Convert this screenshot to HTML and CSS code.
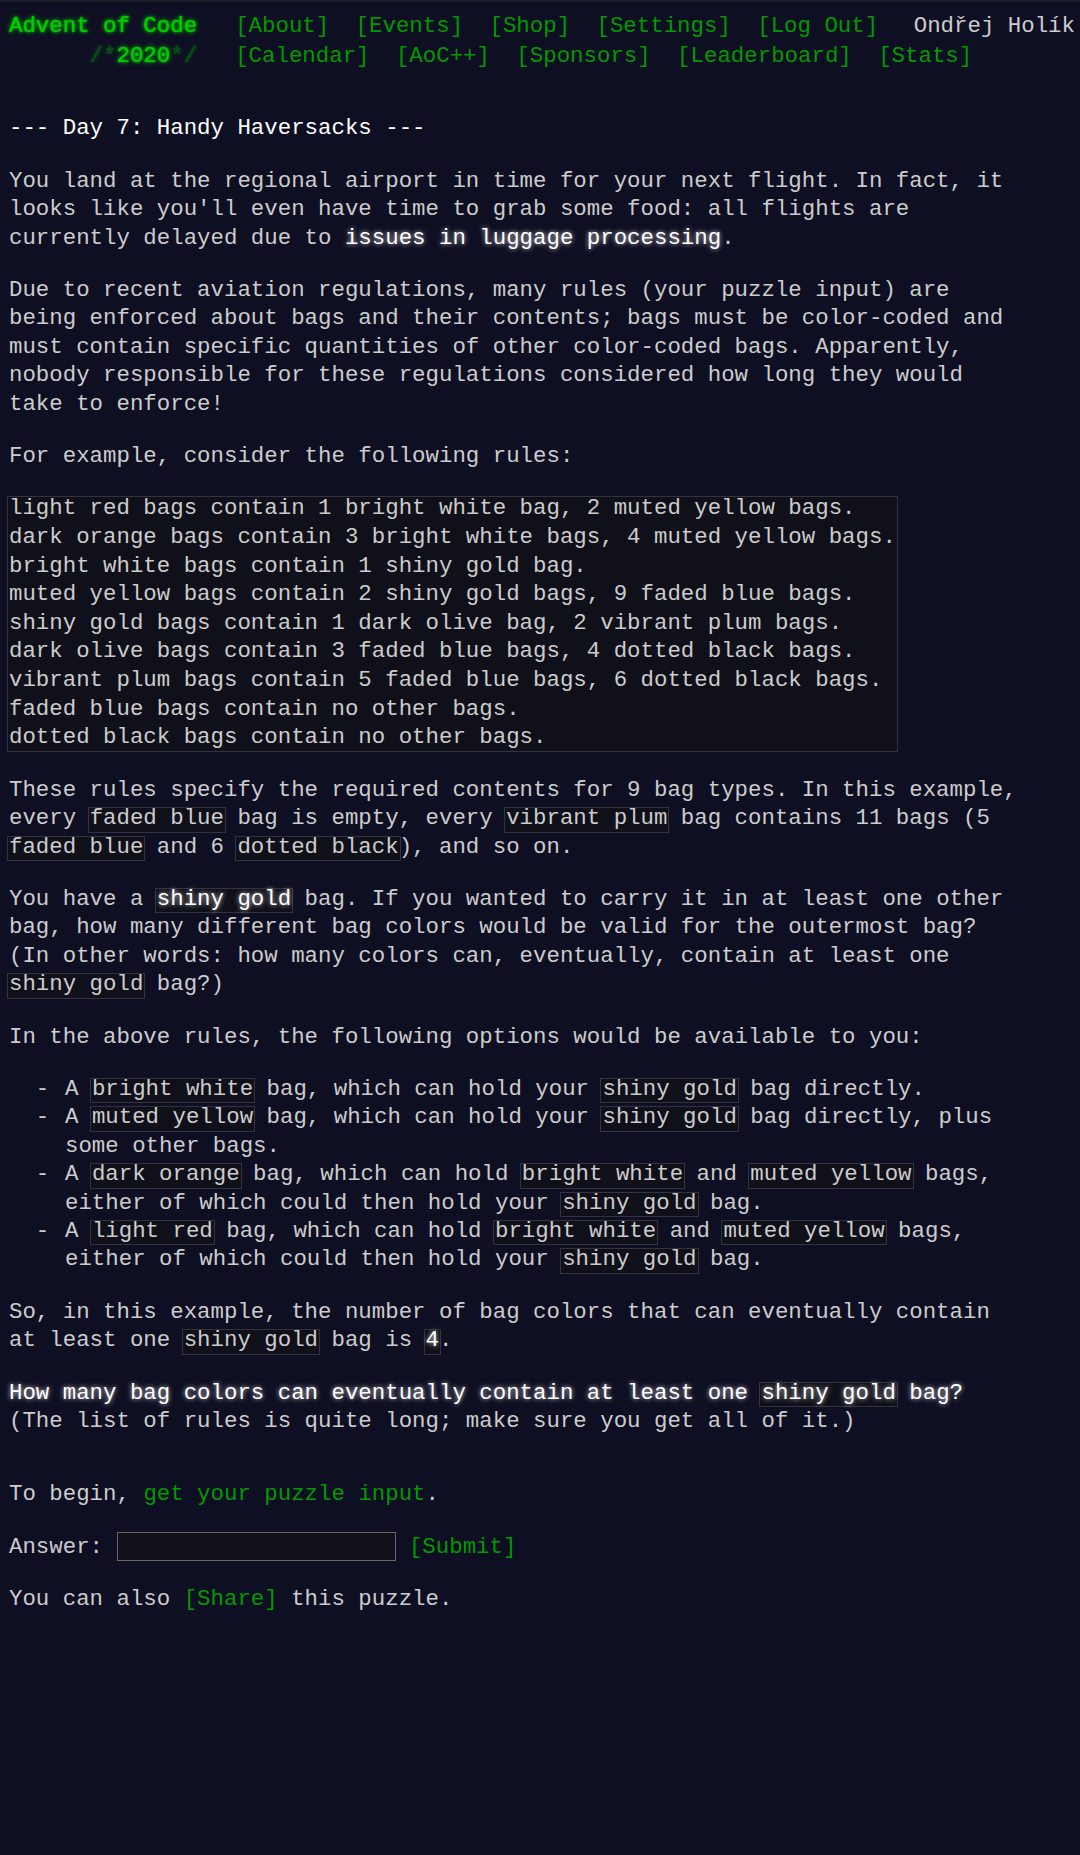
FILE: index.html
```html
<!DOCTYPE html>
<html lang="en">
<head>
<meta charset="utf-8">
<title>Day 7 - Advent of Code 2020</title>
<link rel="stylesheet" href="styles.css">
</head>
<body>
<header class="site-header">
  <div class="hrow">
    <h1 class="title"><a href="#" class="glow">Advent of Code</a></h1>
    <nav class="nav">
      <ul class="nav-list">
        <li><a href="#">[About]</a></li>
        <li><a href="#">[Events]</a></li>
        <li><a href="#">[Shop]</a></li>
        <li><a href="#">[Settings]</a></li>
        <li><a href="#">[Log Out]</a></li>
      </ul>
    </nav>
    <div class="user">Ondřej Holík</div>
  </div>
  <div class="hrow">
    <h1 class="title"><span class="glow dim">&nbsp;&nbsp;&nbsp;&nbsp;&nbsp;&nbsp;/*</span><a href="#" class="glow">2020</a><span class="glow dim">*/</span></h1>
    <nav class="nav">
      <ul class="nav-list">
        <li><a href="#">[Calendar]</a></li>
        <li><a href="#">[AoC++]</a></li>
        <li><a href="#">[Sponsors]</a></li>
        <li><a href="#">[Leaderboard]</a></li>
        <li><a href="#">[Stats]</a></li>
      </ul>
    </nav>
  </div>
</header>
<main class="main">
<article class="day-desc">
<h2 class="day-title">--- Day 7: Handy Haversacks ---</h2>
<p>You land at the regional airport in time for your next flight. In fact, it looks like you'll even have time to grab some food: all flights are currently delayed due to <em>issues in luggage processing</em>.</p>
<p>Due to recent aviation regulations, many rules (your puzzle input) are being enforced about bags and their contents; bags must be color-coded and must contain specific quantities of other color-coded bags. Apparently, nobody responsible for these regulations considered how long they would take to enforce!</p>
<p>For example, consider the following rules:</p>
<pre class="rules"><code>light red bags contain 1 bright white bag, 2 muted yellow bags.
dark orange bags contain 3 bright white bags, 4 muted yellow bags.
bright white bags contain 1 shiny gold bag.
muted yellow bags contain 2 shiny gold bags, 9 faded blue bags.
shiny gold bags contain 1 dark olive bag, 2 vibrant plum bags.
dark olive bags contain 3 faded blue bags, 4 dotted black bags.
vibrant plum bags contain 5 faded blue bags, 6 dotted black bags.
faded blue bags contain no other bags.
dotted black bags contain no other bags.
</code></pre>
<p>These rules specify the required contents for 9 bag types. In this example, every <code>faded blue</code> bag is empty, every <code>vibrant plum</code> bag contains 11 bags (5 <code>faded blue</code> and 6 <code>dotted black</code>), and so on.</p>
<p>You have a <code><em>shiny gold</em></code> bag. If you wanted to carry it in at least one other bag, how many different bag colors would be valid for the outermost bag? (In other words: how many colors can, eventually, contain at least one <code>shiny gold</code> bag?)</p>
<p>In the above rules, the following options would be available to you:</p>
<ul class="options">
<li><span class="opt">A <code>bright white</code> bag, which can hold your <code>shiny gold</code> bag directly.</span></li>
<li><span class="opt">A <code>muted yellow</code> bag, which can hold your <code>shiny gold</code> bag directly, plus some other bags.</span></li>
<li><span class="opt">A <code>dark orange</code> bag, which can hold <code>bright white</code> and <code>muted yellow</code> bags, either of which could then hold your <code>shiny gold</code> bag.</span></li>
<li><span class="opt">A <code>light red</code> bag, which can hold <code>bright white</code> and <code>muted yellow</code> bags, either of which could then hold your <code>shiny gold</code> bag.</span></li>
</ul>
<p>So, in this example, the number of bag colors that can eventually contain at least one <code>shiny gold</code> bag is <code><em>4</em></code>.</p>
<p><em>How many bag colors can eventually contain at least one <code>shiny gold</code> bag?</em> (The list of rules is quite long; make sure you get all of it.)</p>
</article>
<p>To begin, <a href="#">get your puzzle input</a>.</p>
<form class="answer-form"><p>Answer: <input type="text" class="answer-input" autocomplete="off"> <input type="submit" class="submit" value="[Submit]"></p></form>
<p>You can also <a href="#">[Share]</a> this puzzle.</p>
</main>
</body>
</html>
```
FILE: styles.css
```css
html {
  background: #0f0f23;
  border-top: 2px solid #1d1d2b;
}

body {
  margin: 0;
  padding: 8px 8px 8px 9px;
  color: #cccccc;
  font-family: "Liberation Mono", "DejaVu Sans Mono", monospace;
  font-size: 22.4px;
  line-height: 28.4px;
}

a {
  color: #009900;
  text-decoration: none;
}

.site-header {
  white-space: nowrap;
  padding-top: 0.5px;
  margin-bottom: 43.5px;
}

.hrow {
  display: flex;
  align-items: baseline;
  line-height: 30px;
}

.title {
  font-size: 1em;
  font-weight: normal;
  margin: 0;
  width: 188.2px;
  padding-right: 24.8px;
  flex: none;
}

.glow {
  color: #00cc00;
  text-shadow: 0 0 2px #00cc00, 0 0 5px #00cc00;
}

.dim {
  opacity: 0.33;
  white-space: pre;
}

.nav-list {
  list-style: none;
  margin: 0;
  padding: 0;
  display: flex;
}

.nav-list li {
  padding: 0 13.2px;
}

.user {
  margin-left: 22.4px;
  color: #cccccc;
}

.main {
  width: 1012px;
}

.day-desc {
  margin-bottom: 44.8px;
}

.day-title {
  font-size: 1em;
  font-weight: normal;
  color: #ffffff;
  margin: 0 0 24.4px;
  white-space: nowrap;
}

p {
  margin: 24px 0;
}

.day-desc p:last-child {
  margin-bottom: 0;
}

em {
  color: #ffffff;
  font-style: normal;
  text-shadow: 0 0 5px rgba(255, 255, 255, 0.8);
}

code {
  font-family: inherit;
  font-size: 1em;
  position: relative;
  display: inline-block;
  margin: 0;
  padding: 0;
}

code::before {
  content: "";
  position: absolute;
  z-index: -1;
  left: -2px;
  right: -2px;
  top: 3px;
  bottom: 0;
  border: 1px solid #333340;
  background: #10101a;
}

.rules {
  font-family: inherit;
  font-size: 1em;
  line-height: 28.6px;
  margin: 24px 0;
}

.rules code::before {
  top: 2px;
}

.options {
  list-style: none;
  padding: 0;
  margin: 24px 0;
}

.options li {
  display: flex;
}

.options li::before {
  content: "\00a0\00a0-\00a0";
  flex: none;
  width: 56px;
}

.opt {
  display: block;
  flex: 1;
  min-width: 0;
}

.answer-form {
  margin: 0;
}

.answer-input {
  box-sizing: border-box;
  width: 279px;
  height: 29.5px;
  background: #10101a;
  border: 1px solid #666666;
  color: inherit;
  font: inherit;
  line-height: 27px;
  margin: -1px 0;
  padding: 0 2px;
  vertical-align: top;
}

.submit {
  background: transparent;
  border: 0;
  font: inherit;
  color: #009900;
  margin: 0;
  padding: 0;
  cursor: pointer;
}
```
